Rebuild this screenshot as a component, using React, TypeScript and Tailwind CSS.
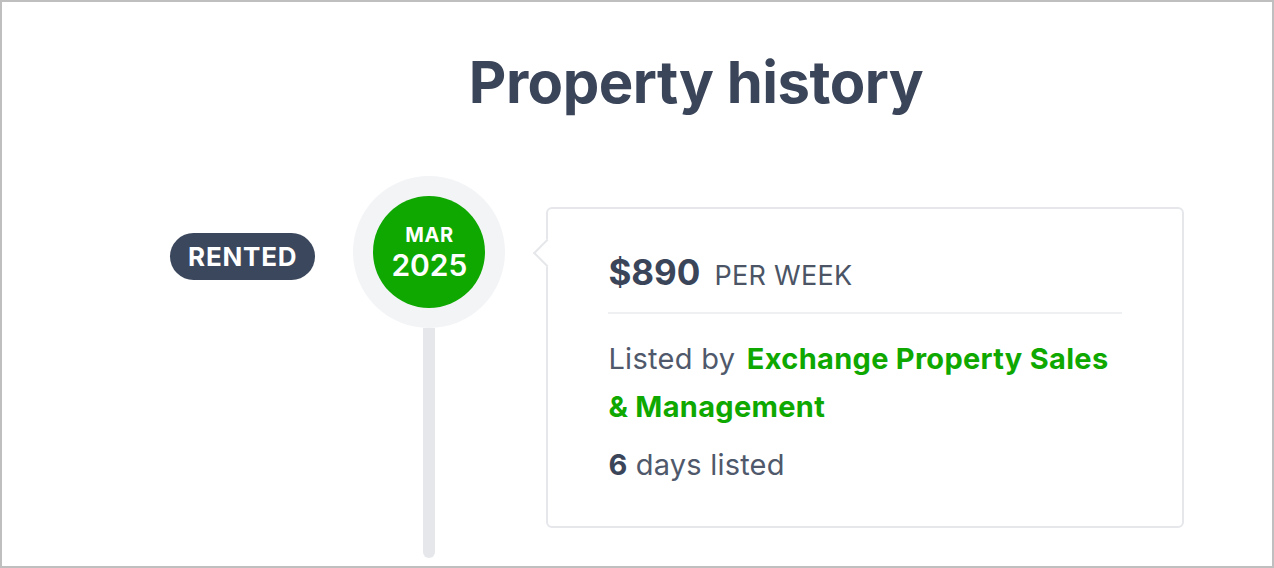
export default function App() {
  return (
    <div className="h-[568px] w-full overflow-hidden border-2 border-[#bfbfbf] bg-white font-['Inter',sans-serif] text-[#3b4559]">
      {/* Heading */}
      <div className="pl-[118px] pt-[50px]">
        <h1 className="text-center text-[58px] font-bold leading-[60px] tracking-[-0.5px]">Property history</h1>
      </div>

      {/* Timeline entry */}
      <div className="mt-[64px] flex items-start pl-[168px]">
        <div className="mt-[57px] flex h-[47px] items-center rounded-full bg-[#3b475c] px-[18px] text-[26px] font-bold tracking-[0.8px] text-white">
          RENTED
        </div>

        <div className="ml-[38px] flex w-[152px] flex-col items-center">
          <div className="flex h-[152px] w-[152px] items-center justify-center rounded-full bg-[#f3f4f6]">
            <div className="flex h-[112px] w-[112px] flex-col items-center justify-center rounded-full bg-[#0ea800] pt-[2px] text-white">
              <span className="text-[20px] font-bold leading-[24px] tracking-[0.5px]">MAR</span>
              <span className="text-[30px] font-semibold leading-[36px]">2025</span>
            </div>
          </div>
          <div className="h-[230px] w-3 rounded-b-full bg-[#e5e7eb]" />
        </div>

        <div className="relative ml-[41px] mt-[31px] h-[321px] w-[638px] rounded-md border-2 border-[#e6e7eb] bg-white px-[60px] pt-[43px]">
          {/* pointer */}
          <div className="absolute left-[-11px] top-[34px] h-[20px] w-[20px] rotate-45 border-b-2 border-l-2 border-[#e6e7eb] bg-white" />

          <div className="flex items-baseline gap-[14px] border-b-2 border-[#eef0f2] pb-[16px]">
            <span className="text-[35px] font-bold leading-[40px]">$890</span>
            <span className="text-[27px] font-normal leading-[40px] tracking-[0.3px] text-[#4b5566]">PER WEEK</span>
          </div>

          <p className="mt-[21px] text-[29px] leading-[48px] tracking-[0.3px] text-[#4f596b]">
            Listed by{" "}
            <span className="ml-[3px] font-bold text-[#0ea800]">Exchange Property Sales &amp; Management</span>
          </p>
          <p className="mt-[10px] text-[29px] leading-[48px] tracking-[0.2px] text-[#4f596b]">
            <span className="font-bold text-[#3b4559]">6</span> days listed
          </p>
        </div>
      </div>
    </div>
  );
}
